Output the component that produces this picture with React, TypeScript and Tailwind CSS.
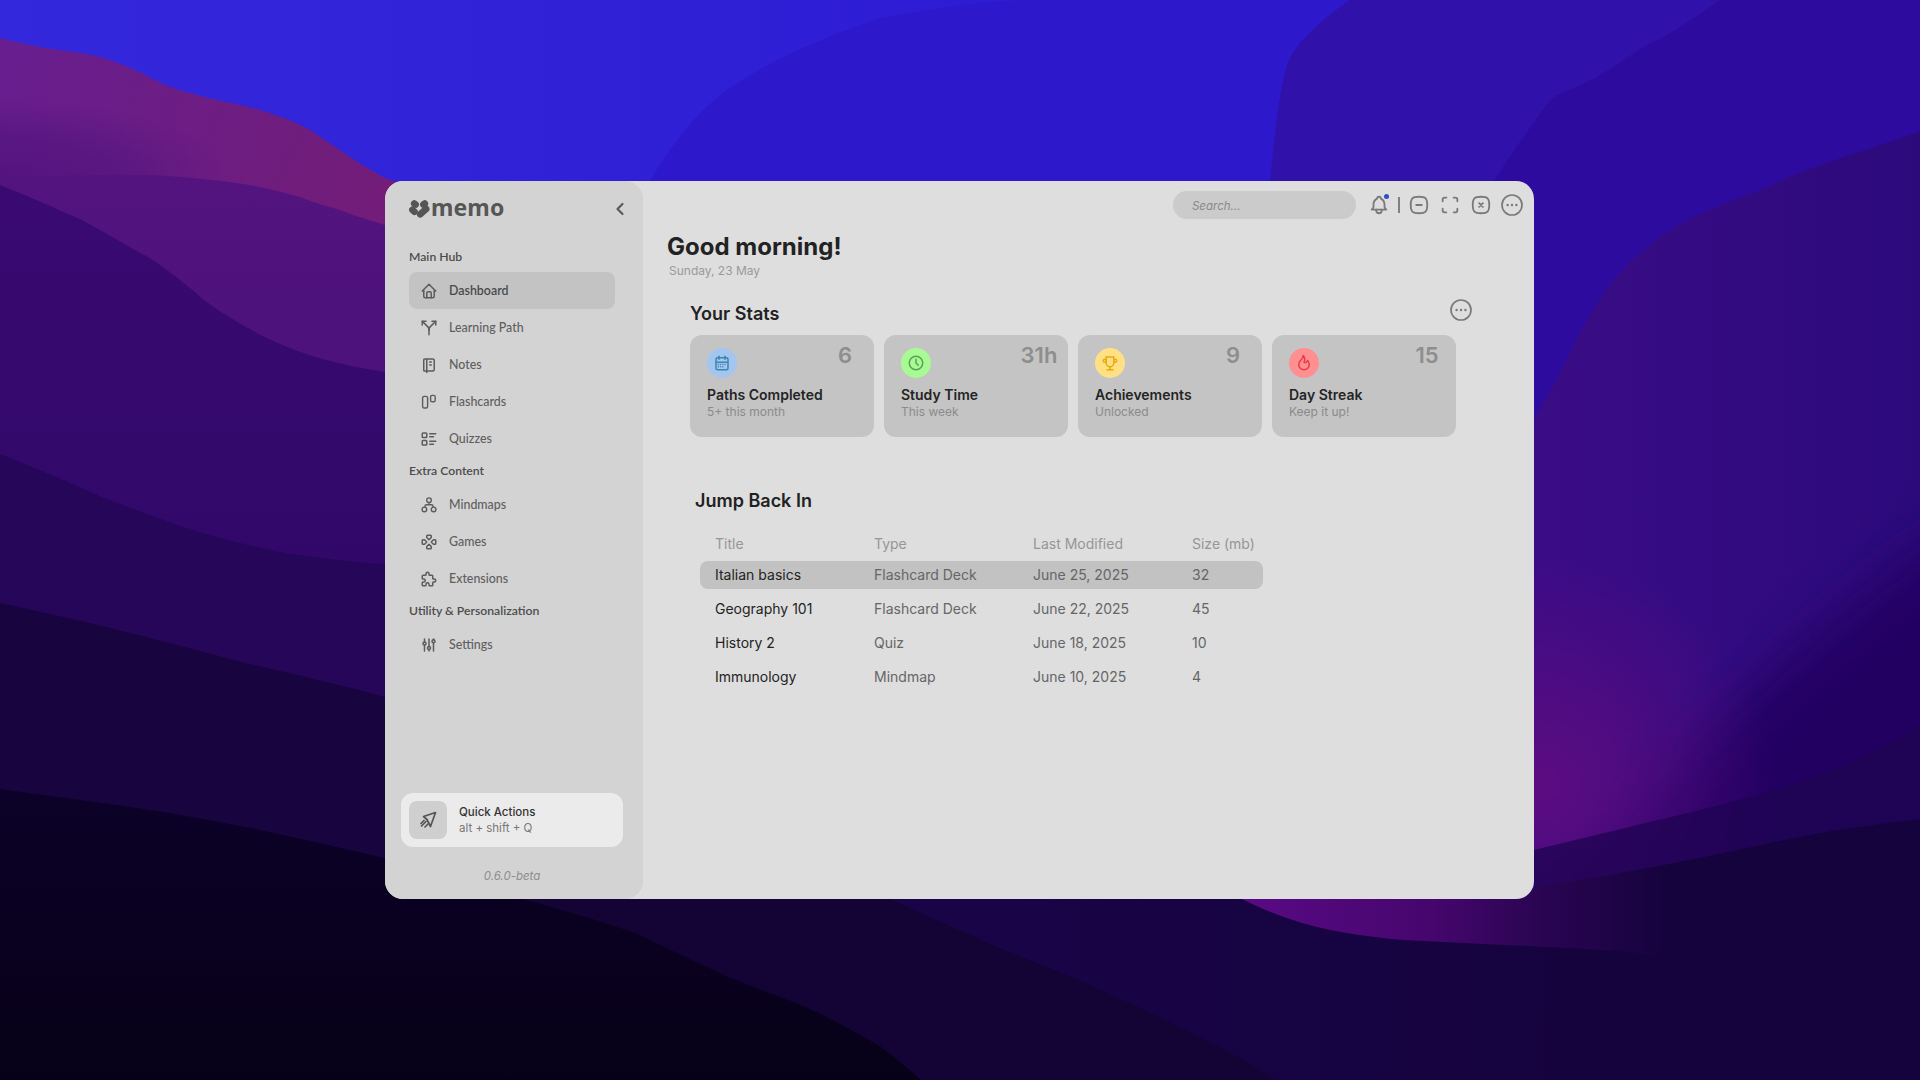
import React from "react";
import {
  TbHome, TbArrowFork, TbNotebook, TbListDetails, TbDeviceGamepad3, TbPuzzle, TbAdjustments,
  TbChevronLeft, TbBell, TbSquareRoundedMinus, TbMaximize, TbSquareRoundedX,
  TbCalendarMonth, TbClock, TbTrophy, TbFlame,
} from "react-icons/tb";

function Wallpaper() {
  return (
    <svg className="absolute inset-0 h-full w-full" viewBox="0 0 1920 1080" preserveAspectRatio="none">
      <defs>
        <linearGradient id="sky" x1="0" y1="0" x2="1" y2="0"><stop offset="0" stopColor="#3428dc" /><stop offset="0.6" stopColor="#2c1ad2" /><stop offset="1" stopColor="#2a16c8" /></linearGradient>
        <linearGradient id="mag" x1="0" y1="0" x2="1" y2="0.5"><stop offset="0" stopColor="#681e90" /><stop offset="0.7" stopColor="#701d7c" /><stop offset="1" stopColor="#761c78" /></linearGradient>
        <radialGradient id="fade" cx="0.5" cy="0.5" r="0.5"><stop offset="0" stopColor="#53147f" /><stop offset="0.5" stopColor="#53147f" stopOpacity="0.7" /><stop offset="1" stopColor="#53147f" stopOpacity="0" /></radialGradient>
        <linearGradient id="h2" x1="0" y1="0" x2="0" y2="1"><stop offset="0" stopColor="#53147f" /><stop offset="1" stopColor="#481078" /></linearGradient>
        <linearGradient id="h3l" x1="0" y1="0" x2="0" y2="1"><stop offset="0" stopColor="#3a0a72" /><stop offset="1" stopColor="#300868" /></linearGradient>
        <linearGradient id="dark" x1="0" y1="0" x2="0" y2="1"><stop offset="0" stopColor="#0c0128" /><stop offset="1" stopColor="#070118" /></linearGradient>
        <linearGradient id="band" gradientUnits="userSpaceOnUse" x1="1234" y1="0" x2="1670" y2="0"><stop offset="0" stopColor="#5a0a85" /><stop offset="0.45" stopColor="#46066e" /><stop offset="0.7" stopColor="#2a0552" /><stop offset="1" stopColor="#15033d" /></linearGradient>
        <linearGradient id="low" gradientUnits="userSpaceOnUse" x1="890" y1="0" x2="1660" y2="0"><stop offset="0" stopColor="#190448" /><stop offset="1" stopColor="#15033d" /></linearGradient>
        <linearGradient id="h3r" gradientUnits="userSpaceOnUse" x1="1534" y1="0" x2="1920" y2="0"><stop offset="0" stopColor="#3a0c86" /><stop offset="1" stopColor="#2c0a7c" /></linearGradient>
        <radialGradient id="glow" gradientUnits="userSpaceOnUse" cx="1545" cy="785" r="230"><stop offset="0" stopColor="#5c0c80" /><stop offset="1" stopColor="#5c0c80" stopOpacity="0" /></radialGradient>
        <filter id="soft" x="-20%" y="-20%" width="140%" height="140%"><feGaussianBlur stdDeviation="28" /></filter>
      </defs>
      <rect width="1920" height="1080" fill="url(#sky)" />
      <path d="M650 181 C680 130 710 100 735 85 C780 55 830 35 880 18 C950 5 1000 0 1050 0 L1350 0 L1300 181 Z" fill="#2d18cc" />
      <path d="M1350 0 C1320 20 1295 45 1288 62 C1280 85 1275 130 1270 181 L1270 540 L1920 540 L1920 0 Z" fill="#3011aa" />
      <path d="M1720 0 C1695 18 1670 35 1647 45 C1620 62 1600 78 1574 88 C1560 92 1552 98 1545 107 C1525 135 1510 155 1492 185 L1492 540 L1920 540 L1920 0 Z" fill="#2d0b9e" />
      <path d="M1920 131 C1870 150 1810 165 1770 186 C1740 198 1710 208 1688 220 C1650 240 1625 265 1606 290 C1590 315 1575 340 1566 362 L1534 420 L1534 900 L1920 900 Z" fill="url(#h3r)" />
      <path d="M2000 500 C1860 590 1760 680 1660 780 L1534 900 L2000 900 Z" fill="#240462" filter="url(#soft)" />
      <rect x="1534" y="500" width="386" height="400" fill="url(#glow)" />
      <path d="M1920 725 C1850 770 1780 790 1700 810 L1534 850 L1534 900 L1920 900 Z" fill="#1f0452" fillOpacity="0.8" />
      <path d="M0 38 C20 43 30 45 40 47 C70 52 80 52 100 57 C130 66 145 75 165 85 C200 98 230 102 260 110 C285 118 295 122 310 130 C340 150 360 165 385 178 L420 190 L420 500 L0 500 Z" fill="url(#mag)" />
      <ellipse cx="0" cy="178" rx="230" ry="80" fill="url(#fade)" />
      <path d="M0 178 C50 176 100 174 150 175 C190 177 225 181 250 185 C270 189 285 193 300 197 C315 203 330 207 340 210 C355 216 370 220 385 225 L420 232 L420 500 L0 500 Z" fill="url(#h2)" />
      <path d="M0 185 C30 197 55 208 82 220 C100 230 118 240 135 250 C145 255 155 261 163 267 C178 278 192 289 204 300 C222 313 243 326 265 337 C285 347 305 354 326 360 C345 365 365 369 385 372 L385 600 L0 600 Z" fill="url(#h3l)" />
      <path d="M0 454 C20 462 40 470 61 479 C95 495 130 508 163 520 C205 535 245 545 285 553 C320 558 350 562 385 564 L385 760 L0 760 Z" fill="#250659" />
      <path d="M0 603 C40 612 80 620 122 631 C165 642 205 652 245 663 C290 673 340 685 385 697 L640 760 L1000 900 L1920 1080 L0 1080 Z" fill="#18043f" />
      <path d="M385 860 L890 899 C925 915 960 930 997 947 C1025 958 1055 970 1086 983 C1130 1003 1175 1024 1220 1047 C1240 1058 1258 1068 1274 1080 L385 1080 Z" fill="#140335" />
      <path d="M890 895 L1920 895 L1920 1080 L1274 1080 C1258 1068 1240 1058 1220 1047 C1175 1024 1130 1003 1086 983 C1055 970 1025 958 997 947 C960 930 925 915 890 899 Z" fill="url(#low)" />
      <path d="M1920 819 C1870 825 1820 832 1770 843 C1730 852 1690 860 1647 868 C1610 875 1575 880 1541 886 L1500 895 L1234 895 C1250 903 1268 912 1287 918 C1320 930 1360 936 1402 940 C1480 944 1560 947 1631 952 L1700 965 L1920 965 Z" fill="url(#band)" />
      <path d="M0 789 C70 799 140 807 204 819 C265 830 325 844 385 858 C435 870 485 887 530 901 C570 912 605 922 640 935 C670 950 700 964 729 977 C760 990 790 1000 819 1013 C842 1025 862 1035 881 1047 C895 1058 908 1068 921 1080 L0 1080 Z" fill="url(#dark)" />
    </svg>
  );
}

function CircleDots({ className }: { className: string }) {
  return (
    <svg viewBox="0 0 24 24" className={className} fill="none" stroke="#7a7a7a" strokeWidth="1.7">
      <circle cx="12" cy="12" r="10" />
      <circle cx="7.6" cy="12" r="1.2" fill="#7a7a7a" stroke="none" />
      <circle cx="12" cy="12" r="1.2" fill="#7a7a7a" stroke="none" />
      <circle cx="16.4" cy="12" r="1.2" fill="#7a7a7a" stroke="none" />
    </svg>
  );
}

function FlashIcon() {
  return (
    <svg viewBox="0 0 18 18" className="h-[18px] w-[18px]" fill="none" stroke="currentColor" strokeWidth="1.4">
      <rect x="2.6" y="3.4" width="5" height="11.6" rx="1.6" />
      <rect x="10.6" y="2.4" width="4.6" height="6.4" rx="1.6" />
    </svg>
  );
}

function MindmapIcon() {
  return (
    <svg viewBox="0 0 18 18" className="h-[18px] w-[18px]" fill="none" stroke="currentColor" strokeWidth="1.4">
      <circle cx="9" cy="4.2" r="2.3" />
      <circle cx="4.4" cy="13.4" r="2.3" />
      <circle cx="13.6" cy="13.4" r="2.3" />
      <path d="M9 6.5 V8.8 M5 11.1 V10.3 C5 9.3 5.5 8.8 6.5 8.8 H11.5 C12.5 8.8 13 9.3 13 10.3 V11.1" />
    </svg>
  );
}

function Logo() {
  return (
    <svg viewBox="0 0 20 18" className="h-[19px] w-[21px]" fill="#555555">
      <rect x="1.5" y="0.6" width="8" height="6.4" rx="3.2" transform="rotate(35 5.5 4)" />
      <rect x="10.5" y="0.6" width="8" height="6.4" rx="3.2" transform="rotate(-35 14.5 4)" />
      <rect x="-0.2" y="6.8" width="9" height="6.4" rx="3.2" transform="rotate(45 4 10)" />
      <rect x="6.5" y="7.8" width="14" height="6.4" rx="3.2" transform="rotate(-42 13.5 11)" />
    </svg>
  );
}

function NavItem({ icon, label, active }: { icon: React.ReactNode; label: string; active?: boolean }) {
  return (
    <div className={`flex h-[37px] items-center rounded-lg pl-[11px] ${active ? "bg-[#c3c3c3] font-semibold text-[#4a4a4a]" : "font-medium text-[#5f5f5f]"}`}>
      <span className="flex w-[29px] shrink-0 text-[18px] text-[#5c5c5c]">{icon}</span>
      <span className="text-[12.4px] leading-4">{label}</span>
    </div>
  );
}

function Section({ children, className }: { children: React.ReactNode; className: string }) {
  return <div className={`text-[12.2px] font-semibold leading-4 text-[#4c4c4c] ${className}`}>{children}</div>;
}

function Sidebar() {
  return (
    <aside className="flex w-[258px] shrink-0 flex-col rounded-[18px] bg-[#d3d3d3] font-['Lato',sans-serif]">
      <div className="flex h-[54px] items-center justify-between pl-6 pr-[13px] pt-[2px]">
        <div className="flex items-center gap-[1px]">
          <Logo />
          <span className="-mt-[3px] font-['Noto_Sans',sans-serif] text-[23px] font-bold leading-none tracking-[0.1px] text-[#565656]">memo</span>
        </div>
        <TbChevronLeft className="text-[20px] text-[#5a5a5a]" strokeWidth={2.6} />
      </div>
      <div className="px-6 pr-7">
        <Section className="mb-[7px] mt-[14px]">Main Hub</Section>
        <NavItem active icon={<TbHome />} label="Dashboard" />
        <NavItem icon={<TbArrowFork />} label="Learning Path" />
        <NavItem icon={<TbNotebook />} label="Notes" />
        <NavItem icon={<FlashIcon />} label="Flashcards" />
        <NavItem icon={<TbListDetails />} label="Quizzes" />
        <Section className="mb-[7px] mt-[6px]">Extra Content</Section>
        <NavItem icon={<MindmapIcon />} label="Mindmaps" />
        <NavItem icon={<TbDeviceGamepad3 />} label="Games" />
        <NavItem icon={<TbPuzzle />} label="Extensions" />
        <Section className="mb-[7px] mt-[6px]">Utility &amp; Personalization</Section>
        <NavItem icon={<TbAdjustments />} label="Settings" />
      </div>
      <div className="mt-auto px-4">
        <div className="flex h-[54px] w-[222px] items-center rounded-xl bg-[#ebebeb] pl-2 font-['Inter',sans-serif]">
          <div className="flex h-[38px] w-[38px] items-center justify-center rounded-lg bg-[#cfcfcf]">
            <svg viewBox="0 0 38 38" className="h-[38px] w-[38px]" fill="none" stroke="#555" strokeWidth="1.7" strokeLinejoin="round" strokeLinecap="round">
              <path d="M26.5 11.5 L14.5 15.5 L18 18.5 L21.5 25.5 Z" />
              <path d="M17 20.5 L12.5 25 M15 19.5 L12 22.5 M19 23 L16 26" />
            </svg>
          </div>
          <div className="ml-3">
            <div className="text-[11.5px] font-medium leading-4 text-[#333]">Quick Actions</div>
            <div className="text-[11.5px] leading-4 text-[#777]">alt + shift + Q</div>
          </div>
        </div>
        <div className="mb-[15px] mt-[21px] w-[222px] text-center font-['Inter',sans-serif] text-[11.5px] italic leading-4 text-[#8e8e8e]">0.6.0-beta</div>
      </div>
    </aside>
  );
}

function StatCard({ icon, bg, color, num, title, sub }: { icon: React.ReactNode; bg: string; color: string; num: string; title: string; sub: string }) {
  return (
    <div className="relative h-[102px] w-[184px] rounded-xl bg-[#c4c4c4] pl-[17px] pt-[13px]">
      <div className={`flex h-[30px] w-[30px] items-center justify-center rounded-full text-[18px] ${bg} ${color}`}>{icon}</div>
      <div className="absolute right-[9px] top-[6px] w-[40px] text-center text-[22px] font-semibold leading-7 text-[#8e8e8e]">{num}</div>
      <div className="mt-[7px] text-sm font-semibold leading-[20px] text-[#242424]">{title}</div>
      <div className="text-xs leading-[14px] text-[#8b8b8b]">{sub}</div>
    </div>
  );
}

const rows = [
  ["Italian basics", "Flashcard Deck", "June 25, 2025", "32"],
  ["Geography 101", "Flashcard Deck", "June 22, 2025", "45"],
  ["History 2", "Quiz", "June 18, 2025", "10"],
  ["Immunology", "Mindmap", "June 10, 2025", "4"],
];

function Main() {
  return (
    <main className="relative flex-1 font-['Inter',sans-serif]">
      <div className="flex h-[48px] items-center pb-[1px] pl-[530px]">
        <div className="flex h-[28px] w-[183px] items-center rounded-full bg-[#cbcbcb] pl-[19px] pt-[4px] text-[11.5px] italic text-[#8a8a8a]">Search...</div>
        <div className="relative ml-[12px] text-[22px] text-[#7a7a7a]">
          <TbBell />
          <span className="absolute right-[1px] top-[0px] h-[5px] w-[5px] rounded-full bg-[#2f4fc4]" />
        </div>
        <div className="ml-[8px] h-[16px] w-[1.5px] bg-[#808080]" />
        <TbSquareRoundedMinus className="ml-[8px] text-[22px] text-[#7a7a7a]" />
        <TbMaximize className="ml-[9px] text-[22px] text-[#7a7a7a]" />
        <TbSquareRoundedX className="ml-[9px] text-[22px] text-[#7a7a7a]" />
        <CircleDots className="ml-[8px] h-6 w-6" />
      </div>
      <div className="pl-6 pt-[2px]">
        <h1 className="text-2xl font-bold leading-[32px] text-[#222]">Good morning!</h1>
        <p className="ml-[2px] text-xs leading-[16px] text-[#9a9a9a]">Sunday, 23 May</p>
      </div>
      <div className="pl-[47px] pt-[21px]">
        <div className="flex w-[783px] items-center justify-between">
          <h2 className="text-lg font-semibold leading-[28px] text-[#222]">Your Stats</h2>
          <CircleDots className="-mt-2 h-6 w-6" />
        </div>
        <div className="mt-[7px] flex gap-[10px]">
          <StatCard icon={<TbCalendarMonth />} bg="bg-[#a3c6f0]" color="text-[#3d86b0]" num="6" title="Paths Completed" sub="5+ this month" />
          <StatCard icon={<TbClock />} bg="bg-[#a8fb92]" color="text-[#5ba05a]" num="31h" title="Study Time" sub="This week" />
          <StatCard icon={<TbTrophy />} bg="bg-[#ffe184]" color="text-[#e8ac10]" num="9" title="Achievements" sub="Unlocked" />
          <StatCard icon={<TbFlame />} bg="bg-[#ff8f91]" color="text-[#e83c44]" num="15" title="Day Streak" sub="Keep it up!" />
        </div>
      </div>
      <div className="pl-[52px] pt-[50px]">
        <h2 className="text-lg font-semibold leading-[28px] text-[#222]">Jump Back In</h2>
      </div>
      <div className="ml-[57px] mt-[15px] w-[563px] text-sm">
        <div className="grid h-[28px] grid-cols-[159px_159px_159px_1fr] items-center pl-[15px] text-[#969696]">
          <span>Title</span><span>Type</span><span>Last Modified</span><span>Size (mb)</span>
        </div>
        {rows.map((r, i) => (
          <div key={r[0]} className={`grid h-[28px] grid-cols-[159px_159px_159px_1fr] items-center rounded-lg pl-[15px] text-[#666] ${i === 0 ? "mt-[3px] bg-[#c2c2c2]" : "mt-[6px]"}`}>
            <span className="-mt-[1px] text-[#232323]">{r[0]}</span><span>{r[1]}</span><span>{r[2]}</span><span>{r[3]}</span>
          </div>
        ))}
      </div>
    </main>
  );
}

export default function App() {
  return (
    <div className="relative flex h-screen w-screen items-center justify-center overflow-hidden bg-[#120540]">
      <Wallpaper />
      <div className="relative mr-px flex h-[718px] w-[1149px] overflow-hidden rounded-[18px] bg-[#dedede]">
        <Sidebar />
        <Main />
      </div>
    </div>
  );
}
